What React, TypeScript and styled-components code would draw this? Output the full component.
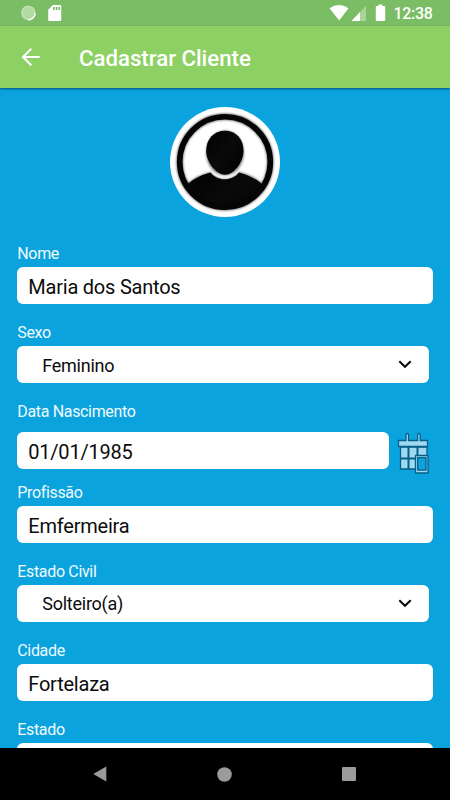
import React from "react";
import styled, { createGlobalStyle } from "styled-components";

const GlobalStyle = createGlobalStyle`
  * { box-sizing: border-box; }
  body { margin: 0; background: #000; font-family: Roboto, "Liberation Sans", sans-serif; }
`;

const Screen = styled.div`
  width: 450px;
  height: 800px;
  display: flex;
  flex-direction: column;
  overflow: hidden;
  background: #0aa3dd;
`;

const StatusBar = styled.div`
  height: 26px;
  flex: none;
  display: flex;
  align-items: center;
  justify-content: space-between;
  background: #7bbd64;
  svg { display: block; }
`;

const Clock = styled.span`
  width: 63px;
  height: 26px;
  padding: 1px 0 0 6.5px;
  color: #fff;
  font-size: 16px;
  font-weight: 500;
  line-height: 26px;
  letter-spacing: -0.3px;
`;

const StatusGroup = styled.div`
  display: flex;
`;

const AppBar = styled.header`
  height: 61.5px;
  flex: none;
  display: flex;
  align-items: center;
  background: #8dd164;
  box-shadow: 0 1px 2px rgba(0, 40, 60, 0.65);
  z-index: 1;
`;

const BackButton = styled.button`
  width: 79px;
  height: 61px;
  padding: 0;
  border: 0;
  background: none;
  svg { display: block; }
`;

const Title = styled.h1`
  margin: 2px 0 0;
  color: #fff;
  font-size: 22.2px;
  font-weight: 500;
  line-height: 28px;
`;

const Form = styled.main`
  flex: 1;
  min-height: 0;
  overflow: hidden;
  padding: 19px 17px 0 17.3px;
`;

const Avatar = styled.div`
  display: flex;
  justify-content: center;
  height: 110.5px;
  margin-bottom: 25px;
`;

const Field = styled.div<{ $height?: number }>`
  height: ${(p) => p.$height ?? 79.2}px;
`;

const Label = styled.label`
  display: block;
  height: 24.8px;
  padding-top: 1px;
  color: #f0faff;
  font-size: 16px;
  letter-spacing: -0.34px;
  line-height: 21px;
`;

const Row = styled.div<{ $offset?: number }>`
  display: flex;
  align-items: center;
  height: 37.4px;
  margin-top: ${(p) => p.$offset ?? 0}px;
`;

const Box = styled.div<{ $width?: number; $select?: boolean }>`
  display: flex;
  align-items: center;
  justify-content: space-between;
  width: ${(p) => p.$width ?? 415.5}px;
  height: 37.4px;
  padding: ${(p) => (p.$select ? "1px 17px 0 25px" : "3px 11px 0 11px")};
  border-radius: 6px;
  background: #fff;
  color: #0c0c0c;
  font-size: ${(p) => (p.$select ? 18 : 20)}px;
  letter-spacing: ${(p) => (p.$select ? -0.26 : -0.22)}px;
`;

const DateButton = styled.button`
  width: 34px;
  height: 44px;
  margin: 6px 0 0 8px;
  padding: 0;
  border: 0;
  background: none;
  svg { display: block; }
`;

const NavBar = styled.nav`
  height: 52px;
  flex: none;
  display: grid;
  grid-template-columns: 124px 124px 124px;
  justify-content: center;
  align-items: center;
  justify-items: center;
  padding-right: 1px;
  background: #000;
  svg { display: block; }
`;

const Chevron = () => (
  <svg width="14" height="10" viewBox="0 0 14 10" fill="none" stroke="#080808" strokeWidth="2">
    <path d="M1.3 1.2 7 6.8 12.7 1.2" />
  </svg>
);

const SyncAndCard = () => (
  <svg width="70" height="26">
    <circle cx="28.3" cy="12.8" r="7" fill="#b2daa2" />
    <circle cx="28.3" cy="12.8" r="6.5" fill="none" stroke="#d5ecc9" strokeWidth="1.4" strokeDasharray="1 1" />
    <path d="M35.2 13.5a7 7 0 0 1-7 6.4" fill="none" stroke="#fff" strokeWidth="1.5" />
    <path d="M53 5h7q1.2 0 1.2 1.2v13.6q0 1.2-1.2 1.2H49.4q-1.2 0-1.2-1.2V9.8z" fill="#fff" />
    <path d="M53.8 7v3M56.5 7v3M59.2 7v3" stroke="#6db34f" strokeWidth="1.5" />
  </svg>
);

const Signals = () => (
  <svg width="60" height="26" viewBox="327 0 60 26">
    <path d="M329.5 8.2q9.5-6.6 19 0L339.2 20.4z" fill="#fff" />
    <path d="M366 6v15h-14.5z" fill="#a8d399" />
    <path d="M360 12v9h-8.5z" fill="#fff" />
    <path d="M378.4 4.5h4V6h2q.8 0 .8.8v13.4q0 .8-.8.8h-7.8q-.8 0-.8-.8V6.8q0-.8.8-.8h1.8z" fill="#fff" />
  </svg>
);

const Portrait = () => (
  <svg width="110" height="110" viewBox="0 0 110 110">
    <defs>
      <clipPath id="portrait"><circle cx="55" cy="55" r="46" /></clipPath>
      <linearGradient id="ink" x2="1" y2="1">
        <stop stopColor="#000" />
        <stop offset=".5" stopColor="#0a0a0a" />
        <stop offset="1" stopColor="#000" />
      </linearGradient>
      <filter id="soft" x="-20%" y="-20%" width="140%" height="140%"><feGaussianBlur stdDeviation="1.2" /></filter>
    </defs>
    <circle cx="55" cy="55" r="55" fill="#fff" />
    <circle cx="55" cy="55" r="45.3" fill="none" stroke="#666" strokeWidth="6.5" filter="url(#soft)" />
    <g clipPath="url(#portrait)">
      <path d="M17 77Q27 68 40.5 65C46 74.5 63 74.5 69 65Q83 68 93 77V110H17z" fill="#777" filter="url(#soft)" />
      <path d="M17.5 77Q27 69 40.5 65.5C47 74.5 62.5 74.5 69 65.5Q83 69 92 77V110H17.5z" fill="url(#ink)" />
      <ellipse cx="55" cy="46" rx="19" ry="22.5" fill="#888" filter="url(#soft)" />
      <path d="M36.2 44C36.2 31.5 44 23.7 55 23.7S73.5 31.5 73.5 44C73.5 55 64 67.7 55 67.7S36.2 55 36.2 44z" fill="url(#ink)" />
    </g>
    <circle cx="55" cy="55" r="45.3" fill="none" stroke="#050505" strokeWidth="5.6" />
  </svg>
);

const Calendar = () => (
  <svg width="34" height="44" viewBox="0 0 34 44" stroke="#075f87" strokeWidth="1.3">
    <path fill="#9ed9f2" d="M3.5 16h26.5v22H3.5z" />
    <path fill="#9ed9f2" d="M1.5 9.5H9V3.5q1.3-2 2.6 0v6h9v-6q1.3-2 2.6 0v6h7.3v6h-29z" />
    <path fill="none" strokeWidth="2" d="M3.5 27.5h16.5M11.5 16v22M20.5 16v11" />
    <path fill="#9ed9f2" d="M18.5 24.5h12.5v17.5h-12.5z" />
    <path fill="#0aa3dd" d="M20.7 26.6h8.3v12.5h-8.3z" />
  </svg>
);

type InputProps = { label: string; value?: string };

const TextField = ({ label, value }: InputProps) => (
  <Field>
    <Label>{label}</Label>
    <Box>{value}</Box>
  </Field>
);

const SelectField = ({ label, value }: InputProps) => (
  <Field>
    <Label>{label}</Label>
    <Box $select $width={412}>{value}<Chevron /></Box>
  </Field>
);

export default function App() {
  return (
    <Screen>
      <GlobalStyle />
      <StatusBar>
        <SyncAndCard />
        <StatusGroup><Signals /><Clock>12:38</Clock></StatusGroup>
      </StatusBar>
      <AppBar>
        <BackButton aria-label="Voltar">
          <svg width="79" height="61" viewBox="0 26 79 61" fill="none" stroke="#fff" strokeWidth="2.1">
            <path d="M39.7 57H23.5M31.3 48.7 23 57l8.3 8.3" />
          </svg>
        </BackButton>
        <Title>Cadastrar Cliente</Title>
      </AppBar>
      <Form>
        <Avatar><Portrait /></Avatar>
        <TextField label="Nome" value="Maria dos Santos" />
        <SelectField label="Sexo" value="Feminino" />
        <Field $height={80.4}>
          <Label>Data Nascimento</Label>
          <Row $offset={6.5}>
            <Box $width={372}>01/01/1985</Box>
            <DateButton aria-label="Selecionar data"><Calendar /></DateButton>
          </Row>
        </Field>
        <TextField label="Profissão" value="Emfermeira" />
        <SelectField label="Estado Civil" value="Solteiro(a)" />
        <TextField label="Cidade" value="Fortelaza" />
        <TextField label="Estado" />
      </Form>
      <NavBar>
        <svg width="15" height="16"><path d="M.3 8 13.3.5v15z" fill="#9b9b9b" /></svg>
        <svg width="15" height="15"><circle cx="7.5" cy="7.5" r="7.3" fill="#9b9b9b" /></svg>
        <svg width="14" height="14"><rect width="14" height="14" rx="1" fill="#9b9b9b" /></svg>
      </NavBar>
    </Screen>
  );
}
